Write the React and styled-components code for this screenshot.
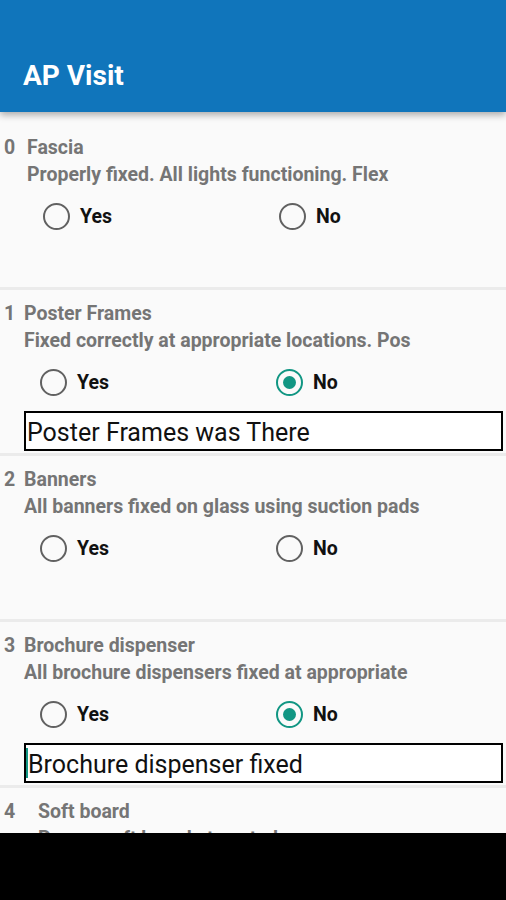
import React from 'react'
import styled, { createGlobalStyle } from 'styled-components'

const GlobalStyle = createGlobalStyle`
  html, body {
    margin: 0;
    padding: 0;
    background: #000;
  }
  body {
    font-family: Roboto, "Noto Sans", "Liberation Sans", sans-serif;
  }
`

const Screen = styled.div`
  width: 506px;
  height: 900px;
  display: flex;
  flex-direction: column;
  background: #fafafa;
  overflow: hidden;
`

const AppBar = styled.header`
  position: relative;
  z-index: 2;
  height: 112px;
  flex: 0 0 112px;
  background: #1075bb;
  box-shadow: 0 3px 7px rgba(0, 0, 0, 0.32);
  display: flex;
  align-items: flex-end;
  padding: 0 0 21px 23px;
  box-sizing: border-box;
`

const Title = styled.h1`
  margin: 0;
  color: #fff;
  font-size: 28px;
  font-weight: 700;
  line-height: 30px;
`

const List = styled.div`
  flex: 1;
  overflow: hidden;
  padding-top: 12px;
`

const Item = styled.section`
  height: 166px;
  box-sizing: border-box;
  padding-top: 13px;
  border-bottom: 3px solid #ebebeb;
`

const TitleRow = styled.div`
  display: flex;
  height: 22px;
  line-height: 22px;
  font-size: 19.5px;
  font-weight: 700;
  color: #757575;
`

const Num = styled.span`
  box-sizing: border-box;
  width: ${p => p.$indent}px;
  padding-left: 4px;
  flex: 0 0 auto;
`

const Desc = styled.div`
  margin-top: 5px;
  padding-left: ${p => p.$indent}px;
  height: 22px;
  line-height: 22px;
  font-size: 19.5px;
  font-weight: 700;
  color: #757575;
  white-space: nowrap;
`

const RadioRow = styled.div`
  margin-top: 13px;
  height: 34px;
  padding-left: ${p => p.$indent + 16}px;
  display: grid;
  grid-template-columns: 236px auto;
  align-items: center;
`

const Option = styled.label`
  display: flex;
  align-items: center;
  gap: 10px;
  font-size: 19.5px;
  font-weight: 700;
  color: #111;
`

const Circle = styled.span`
  width: 27px;
  height: 27px;
  box-sizing: border-box;
  border-radius: 50%;
  border: 2.5px solid ${p => (p.$checked ? '#119683' : '#616161')};
  display: flex;
  align-items: center;
  justify-content: center;

  &::after {
    content: '';
    display: ${p => (p.$checked ? 'block' : 'none')};
    width: 13px;
    height: 13px;
    border-radius: 50%;
    background: #119683;
  }
`

const Answer = styled.div`
  margin: 12px 3px 0 ${p => p.$indent}px;
  height: 40px;
  box-sizing: border-box;
  border: 2.5px solid #000;
  background: #fff;
  display: flex;
  align-items: center;
  padding: 3px 0 0 1px;
  font-size: 25px;
  color: #111;
  white-space: nowrap;
`

const Caret = styled.span`
  width: 2px;
  height: 30px;
  background: #119683;
  margin: -3px 0 0 -1px;
`

const NavBar = styled.div`
  flex: 0 0 67px;
  background: #000;
`

const items = [
  { title: 'Fascia', desc: 'Properly fixed. All lights functioning. Flex', indent: 27 },
  { title: 'Poster Frames', desc: 'Fixed correctly at appropriate locations. Pos', indent: 24, no: true, note: 'Poster Frames was There' },
  { title: 'Banners', desc: 'All banners fixed on glass using suction pads', indent: 24 },
  { title: 'Brochure dispenser', desc: 'All brochure dispensers fixed at appropriate', indent: 24, no: true, note: 'Brochure dispenser fixed', caret: true },
  { title: 'Soft board', desc: 'Proper soft board at pasted', indent: 38, last: true },
]

function Radio ({ checked, label }) {
  return (
    <Option>
      <Circle $checked={checked} />
      {label}
    </Option>
  )
}

export default function App () {
  return (
    <Screen>
      <GlobalStyle />
      <AppBar>
        <Title>AP Visit</Title>
      </AppBar>
      <List>
        {items.map((item, i) => (
          <Item key={i}>
            <TitleRow>
              <Num $indent={item.indent}>{i}</Num>
              <span>{item.title}</span>
            </TitleRow>
            <Desc $indent={item.indent}>{item.desc}</Desc>
            {!item.last && (
              <RadioRow $indent={item.indent}>
                <Radio label="Yes" checked={false} />
                <Radio label="No" checked={!!item.no} />
              </RadioRow>
            )}
            {item.note && (
              <Answer $indent={item.indent}>
                {item.caret && <Caret />}
                {item.note}
              </Answer>
            )}
          </Item>
        ))}
      </List>
      <NavBar />
    </Screen>
  )
}
